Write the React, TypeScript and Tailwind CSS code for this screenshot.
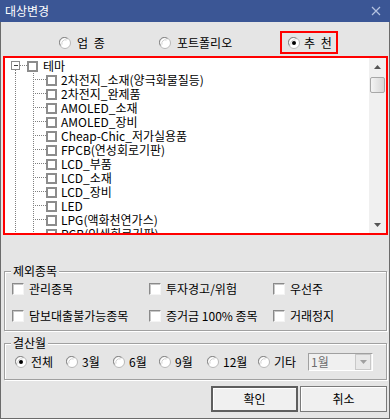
import React from 'react';

const FONT = '"Noto Sans CJK KR", "Noto Sans", sans-serif';

const treeItems = [
  '2차전지_소재(양극화물질등)',
  '2차전지_완제품',
  'AMOLED_소재',
  'AMOLED_장비',
  'Cheap-Chic_저가실용품',
  'FPCB(연성회로기판)',
  'LCD_부품',
  'LCD_소재',
  'LCD_장비',
  'LED',
  'LPG(액화천연가스)',
  'PCB(인쇄회로기판)',
];

function Radio({ checked = false }: { checked?: boolean }) {
  return (
    <svg width="12" height="12" viewBox="0 0 12 12" className="shrink-0">
      <circle cx="6" cy="6" r="5.5" fill="#ffffff" stroke="#b8b8b8" />
      <path d="M1.8 8.6 A4.8 4.8 0 0 1 8.6 1.8" fill="none" stroke="#8a8a8a" strokeWidth="1" />
      <path d="M3 7.6 A3.6 3.6 0 0 1 7.6 3" fill="none" stroke="#d0d0d0" strokeWidth="1" />
      {checked && <circle cx="6" cy="6" r="2" fill="#000000" />}
    </svg>
  );
}

function Check() {
  return (
    <div className="h-[12px] w-[12px] shrink-0 border border-t-[#8a8a8a] border-l-[#8a8a8a] border-r-[#f4f4f4] border-b-[#f4f4f4] bg-white shadow-[inset_1px_1px_0_#c8c8c8]" />
  );
}

function TreeCheck() {
  return <div className="h-[11px] w-[11px] shrink-0 border-2 border-[#8c8c8c] bg-white" />;
}

function RootGuides() {
  return (
    <svg width="22" height="14" viewBox="0 0 22 14" className="shrink-0" shapeRendering="crispEdges">
      <rect x="6.5" y="2.5" width="8" height="8" fill="#ffffff" stroke="#8c8c8c" />
      <line x1="8.5" y1="6.5" x2="13" y2="6.5" stroke="#404040" />
      <line x1="15" y1="6.5" x2="22" y2="6.5" stroke="#808080" strokeDasharray="1 1" />
      <line x1="10.5" y1="11" x2="10.5" y2="14" stroke="#808080" strokeDasharray="1 1" />
    </svg>
  );
}

function ChildGuides() {
  return (
    <svg width="41" height="14" viewBox="0 0 41 14" className="shrink-0" shapeRendering="crispEdges">
      <line x1="10.5" y1="0" x2="10.5" y2="14" stroke="#808080" strokeDasharray="1 1" />
      <line x1="28.5" y1="0" x2="28.5" y2="14" stroke="#808080" strokeDasharray="1 1" />
      <line x1="30" y1="6.5" x2="41" y2="6.5" stroke="#808080" strokeDasharray="1 1" />
    </svg>
  );
}

export default function App() {
  const excludes = ['관리종목', '투자경고/위험', '우선주', '담보대출불가능종목', '증거금 100% 종목', '거래정지'];
  const months = [
    { label: '전체', w: 'w-[51px]', checked: true },
    { label: '3월', w: 'w-[47px]' },
    { label: '6월', w: 'w-[46px]' },
    { label: '9월', w: 'w-[48px]' },
    { label: '12월', w: 'w-[51px]' },
    { label: '기타', w: 'w-[50px]' },
  ];

  return (
    <div
      className="flex h-[419px] w-[390px] flex-col bg-[#e5e5e5] text-[12px] leading-[14px] text-black"
      style={{ fontFamily: FONT }}
    >
      {/* Title bar */}
      <div className="flex h-[22px] shrink-0 items-center justify-between bg-[#3b5695] pl-[5px] pr-[9px]">
        <span className="text-[12px] text-white">대상변경</span>
        <svg width="10" height="10" viewBox="0 0 10 10">
          <path d="M1 1 L9 9 M9 1 L1 9" stroke="#b4c2e0" strokeWidth="1.2" />
        </svg>
      </div>

      <div className="flex flex-1 flex-col border-x border-b border-[#6b6b6b]">
        {/* Target type radios */}
        <div className="flex h-[34px] shrink-0 items-start pl-[58px] pt-[9px]">
          <div className="flex h-[23px] w-[100px] items-center">
            <Radio />
            <span className="ml-[6px] [word-spacing:3px]">업 종</span>
          </div>
          <div className="flex h-[23px] w-[121px] items-center">
            <Radio />
            <span className="ml-[6px]">포트폴리오</span>
          </div>
          <div className="flex h-[23px] w-[58px] items-center border-2 border-[#ff0000] pl-[6px]">
            <Radio checked />
            <span className="ml-[4px] [word-spacing:3px]">추 천</span>
          </div>
        </div>

        {/* Tree */}
        <div className="ml-[2px] flex h-[179px] w-[385px] shrink-0 border-2 border-[#ff0000] bg-white">
          <div className="flex-1 overflow-hidden pt-[1px]">
            <div className="flex h-[14px] items-center">
              <RootGuides />
              <TreeCheck />
              <span className="ml-[5px] whitespace-nowrap">테마</span>
            </div>
            {treeItems.map((item) => (
              <div key={item} className="flex h-[14px] items-center">
                <ChildGuides />
                <TreeCheck />
                <span className="ml-[4px] whitespace-nowrap">{item}</span>
              </div>
            ))}
          </div>
          <div className="flex w-[17px] shrink-0 flex-col items-center bg-[#f0f0f0]">
            <div className="flex h-[17px] items-center justify-center">
              <svg width="7" height="4" viewBox="0 0 7 4">
                <path d="M0 4 L3.5 0 L7 4 Z" fill="#555555" />
              </svg>
            </div>
            <div className="mt-[2px] h-[16px] w-[15px] rounded-[2px] border border-[#a8a8a8] bg-gradient-to-r from-[#f4f4f4] to-[#d6d6d6]" />
            <div className="flex-1" />
            <div className="flex h-[17px] items-center justify-center">
              <svg width="7" height="4" viewBox="0 0 7 4">
                <path d="M0 0 L7 0 L3.5 4 Z" fill="#555555" />
              </svg>
            </div>
          </div>
        </div>

        {/* 제외종목 */}
        <fieldset className="ml-[3px] mt-[29px] w-[383px] border border-[#a0a0a0] pb-[6px] pt-[3px] shadow-[1px_1px_0_#ffffff,inset_1px_1px_0_#ffffff]">
          <legend className="ml-[6px] bg-[#e5e5e5] px-[2px] leading-[14px]">제외종목</legend>
          <div className="grid grid-cols-[137px_124px_1fr] gap-y-[11px] pl-[7px]">
            {excludes.map((label) => (
              <div key={label} className="flex h-[16px] items-center">
                <Check />
                <span className="ml-[5px] whitespace-nowrap">{label}</span>
              </div>
            ))}
          </div>
        </fieldset>

        {/* 결산월 */}
        <fieldset className="ml-[3px] mt-[5px] w-[383px] border border-[#a0a0a0] pb-[7px] pt-[2px] shadow-[1px_1px_0_#ffffff,inset_1px_1px_0_#ffffff]">
          <legend className="ml-[6px] bg-[#e5e5e5] px-[2px] leading-[14px]">결산월</legend>
          <div className="flex h-[20px] items-center pl-[10px]">
            {months.map((m) => (
              <div key={m.label} className={`flex items-center ${m.w}`}>
                <Radio checked={m.checked} />
                <span className="ml-[4px] whitespace-nowrap">{m.label}</span>
              </div>
            ))}
            <div className="flex h-[18px] w-[65px] items-center border border-t-[#a0a0a0] border-l-[#a0a0a0] border-r-[#ffffff] border-b-[#ffffff] bg-[#f0f0f0]">
              <span className="ml-[2px] flex-1 text-[#6d6d6d]">1월</span>
              <div className="mr-[1px] flex h-[16px] w-[16px] items-center justify-center border border-[#c8c8c8] bg-[#e8e8e8]">
                <svg width="7" height="4" viewBox="0 0 7 4">
                  <path d="M0 0 L7 0 L3.5 4 Z" fill="#a0a0a0" />
                </svg>
              </div>
            </div>
          </div>
        </fieldset>

        {/* Buttons */}
        <div className="mt-[6px] flex justify-end gap-[2px] pr-[2px]">
          <button className="flex h-[26px] w-[87px] items-center justify-center border-2 border-[#5e5e5e] bg-[#f0f0f0] shadow-[inset_1px_1px_0_#ffffff]">
            확인
          </button>
          <button className="flex h-[26px] w-[87px] items-center justify-center border border-[#7a7a7a] bg-[#f0f0f0] shadow-[inset_1px_1px_0_#ffffff]">
            취소
          </button>
        </div>
      </div>
    </div>
  );
}
